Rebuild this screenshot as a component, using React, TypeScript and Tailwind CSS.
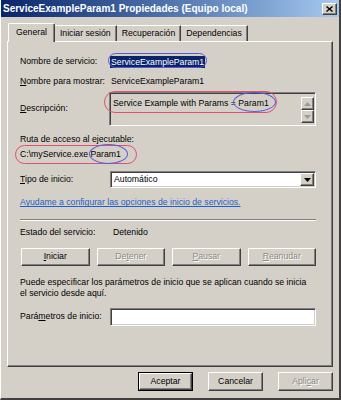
import React from 'react';

const raised =
  'border border-t-white border-l-white border-r-[#404040] border-b-[#404040] shadow-[inset_-1px_-1px_0_#808080] bg-[#d4d0c8]';
const sunken =
  'border border-t-[#808080] border-l-[#808080] border-r-white border-b-white shadow-[inset_1px_1px_0_#404040,inset_-1px_-1px_0_#d4d0c8]';
const disabledText = 'text-[#8c8a84] [text-shadow:1px_1px_0_#fff]';

const Tab = ({ label, active }: { label: string; active?: boolean }) =>
  active ? (
    <div className="relative z-10 -mb-[1px] h-[19px] px-[7px] flex items-center border-t border-l border-r border-t-white border-l-white border-r-[#404040] shadow-[inset_-1px_0_0_#808080] bg-[#d4d0c8] rounded-t-[2px]">
      {label}
    </div>
  ) : (
    <div className="h-[16px] px-[5px] flex items-center border-t border-r border-t-white border-r-[#404040] shadow-[inset_-1px_0_0_#808080] text-black">
      {label}
    </div>
  );

const Arrow = ({ dir, color }: { dir: 'up' | 'down'; color: string }) => (
  <svg width="7" height="4" viewBox="0 0 7 4">
    {dir === 'up' ? <path d="M3.5 0 L7 4 L0 4 Z" fill={color} /> : <path d="M0 0 L7 0 L3.5 4 Z" fill={color} />}
  </svg>
);

const PanelButton = ({ children, disabled }: { children: React.ReactNode; disabled?: boolean }) => (
  <div className={`${raised} w-[69px] h-[18px] flex items-center justify-center ${disabled ? disabledText : ''}`}>
    {children}
  </div>
);

const App = () => {
  return (
    <div className="w-[341px] h-[400px] bg-[#d4d0c8] overflow-hidden font-['Liberation_Sans',Arial,sans-serif] text-[8.7px] text-black flex flex-col border-r-2 border-b-2 border-r-[#404040] border-b-[#404040] border-l border-l-white">
      {/* title bar */}
      <div className="h-[17px] flex items-center justify-between bg-linear-to-r from-[#0a246a] to-[#a6caf0] pl-[2px] pr-[2px]">
        <span className="text-white font-bold text-[10px] leading-none">ServiceExampleParam1 Propiedades (Equipo local)</span>
        <div className={`${raised} w-[15px] h-[12px] flex items-center justify-center`}>
          <svg width="7" height="6" viewBox="0 0 7 6">
            <path d="M0.5 0.5 L6.5 5.5 M6.5 0.5 L0.5 5.5" stroke="#000" strokeWidth="1.4" />
          </svg>
        </div>
      </div>

      {/* tabs */}
      <div className="mt-[6px] pl-[7px] flex items-end">
        <Tab label="General" active />
        <Tab label="Iniciar sesión" />
        <Tab label="Recuperación" />
        <Tab label="Dependencias" />
      </div>

      {/* panel */}
      <div className="relative ml-[6px] w-[326px] h-[326px] border border-t-white border-l-white border-r-[#404040] border-b-[#404040] shadow-[inset_-1px_-1px_0_#808080] flex flex-col pl-[12px] pr-[16px]">
        <div className="mt-[12px] h-[16px] flex items-center">
          <span className="w-[90px]">Nombre de servicio:</span>
          <span className="bg-[#0a246a] text-white px-[1px] leading-[12px]">ServiceExampleParam1</span>
        </div>

        <div className="mt-[4px] h-[16px] flex items-center">
          <span className="w-[90px]">
            <span className="underline">N</span>ombre para mostrar:
          </span>
          <span className="pl-[1px]">ServiceExampleParam1</span>
        </div>

        <div className="mt-[2px] h-[34px] flex items-start">
          <span className="w-[89px] pt-[10px]">
            <span className="underline">D</span>escripción:
          </span>
          <div className={`${sunken} flex-1 h-[34px] flex`}>
            <div className="flex-1 pl-[3px] pt-[4px]">Service Example with Params = Param1</div>
            <div className="w-[14px] pt-[4px] pr-[1px] flex flex-col">
              <div className={`${raised} h-[13px] flex items-center justify-center`}>
                <Arrow dir="up" color="#9c9a94" />
              </div>
              <div className={`${raised} h-[13px] flex items-center justify-center`}>
                <Arrow dir="down" color="#9c9a94" />
              </div>
            </div>
          </div>
        </div>

        <div className="mt-[7px] h-[14px] flex items-center">Ruta de acceso al ejecutable:</div>
        <div className="mt-[1px] h-[14px] flex items-center">C:\myService.exe Param1</div>

        <div className="mt-[9px] h-[17px] flex items-center">
          <span className="w-[90px]">
            <span className="underline">T</span>ipo de inicio:
          </span>
          <div className={`${sunken} flex-1 h-[17px] bg-white flex items-center`}>
            <span className="flex-1 pl-[3px]">Automático</span>
            <div className={`${raised} w-[14px] h-[13px] mr-[1px] flex items-center justify-center`}>
              <Arrow dir="down" color="#000" />
            </div>
          </div>
        </div>

        <div className="mt-[8px] h-[14px] flex items-center">
          <span className="text-[#1e5fc8] underline">Ayudame a configurar las opciones de inicio de servicios.</span>
        </div>

        <div className="mt-[9px] h-[2px] border-t border-t-[#808080] border-b border-b-white" />

        <div className="mt-[5px] h-[14px] flex items-center">
          <span className="w-[93px]">Estado del servicio:</span>
          <span>Detenido</span>
        </div>

        <div className="mt-[8px] flex gap-[7px] pl-[1px]">
          <PanelButton>
            <span>
              <span className="underline">I</span>niciar
            </span>
          </PanelButton>
          <PanelButton disabled>
            <span>
              De<span className="underline">t</span>ener
            </span>
          </PanelButton>
          <PanelButton disabled>
            <span>
              <span className="underline">P</span>ausar
            </span>
          </PanelButton>
          <PanelButton disabled>
            <span>
              <span className="underline">R</span>eanudar
            </span>
          </PanelButton>
        </div>

        <p className="mt-[11px] w-[292px] leading-[11px]">
          Puede especificar los parámetros de inicio que se aplican cuando se inicia el servicio desde aquí.
        </p>

        <div className="mt-[9px] h-[18px] flex items-center">
          <span className="w-[90px]">
            Pará<span className="underline">m</span>etros de inicio:
          </span>
          <div className={`${sunken} flex-1 h-[18px] bg-white`} />
        </div>

        {/* hand-drawn annotation ovals */}
        <div className="absolute left-[100px] top-[11px] w-[99px] h-[15px] rounded-full border border-[#5a5ad8]" />
        <div className="absolute left-[96px] top-[49px] w-[173px] h-[22px] rounded-full border border-[#e0506e]" />
        <div className="absolute left-[225px] top-[50px] w-[43px] h-[20px] rounded-[50%] border border-[#5a5ad8]" />
        <div className="absolute left-[7px] top-[103px] w-[122px] h-[19px] rounded-full border border-[#e0506e]" />
        <div className="absolute left-[81px] top-[102px] w-[39px] h-[20px] rounded-[50%] border border-[#5a5ad8]" />
      </div>

      {/* dialog buttons */}
      <div className="mt-[5px] pr-[6px] flex justify-end gap-[15px]">
        <div className="w-[55px] h-[19px] border border-black flex">
          <div className={`${raised} flex-1 flex items-center justify-center`}>Aceptar</div>
        </div>
        <div className={`${raised} w-[55px] h-[19px] flex items-center justify-center`}>Cancelar</div>
        <div className={`${raised} w-[55px] h-[19px] flex items-center justify-center ${disabledText}`}>
          <span>
            Apli<span className="underline">c</span>ar
          </span>
        </div>
      </div>
    </div>
  );
};

export default App;
